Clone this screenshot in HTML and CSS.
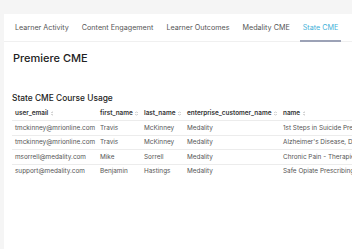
FILE: index.html
```html
<!DOCTYPE html>
<html lang="en">
<head>
    <meta charset="UTF-8">
    <title>State CME</title>
    <link rel="stylesheet" href="styles.css">
</head>
<body>
    <div class="panel">
        <nav class="tabs">
            <a class="tab">Learner Activity</a>
            <a class="tab">Content Engagement</a>
            <a class="tab">Learner Outcomes</a>
            <a class="tab">Medality CME</a>
            <a class="tab active">State CME</a>
        </nav>

        <div class="content">
            <h1 class="page-title">Premiere CME</h1>

            <h2 class="section-title">State CME Course Usage</h2>
            <table class="usage">
                <colgroup>
                    <col class="c-email">
                    <col class="c-first">
                    <col class="c-last">
                    <col class="c-ent">
                    <col class="c-name">
                </colgroup>
                <thead>
                    <tr>
                        <th>user_email <span class="sort"></span></th>
                        <th>first_name <span class="sort"></span></th>
                        <th>last_name <span class="sort"></span></th>
                        <th>enterprise_customer_name <span class="sort"></span></th>
                        <th>name <span class="sort"></span></th>
                    </tr>
                </thead>
                <tbody>
                    <tr>
                        <td>tmckinney@mrionline.com</td>
                        <td>Travis</td>
                        <td>McKinney</td>
                        <td>Medality</td>
                        <td>1st Steps in Suicide Pre</td>
                    </tr>
                    <tr>
                        <td>tmckinney@mrionline.com</td>
                        <td>Travis</td>
                        <td>McKinney</td>
                        <td>Medality</td>
                        <td>Alzheimer's Disease, De</td>
                    </tr>
                    <tr>
                        <td>msorrell@medality.com</td>
                        <td>Mike</td>
                        <td>Sorrell</td>
                        <td>Medality</td>
                        <td>Chronic Pain - Therapie</td>
                    </tr>
                    <tr>
                        <td>support@medality.com</td>
                        <td>Benjamin</td>
                        <td>Hastings</td>
                        <td>Medality</td>
                        <td>Safe Opiate Prescribing</td>
                    </tr>
                </tbody>
            </table>
        </div>
    </div>
</body>
</html>
```

FILE: styles.css
```css
body {
    margin: 0;
    background: #f5f5f5;
    font-family: Inter, "Noto Sans", sans-serif;
    color: #333;
    overflow: hidden;
    height: 249px;
}

.panel {
    margin: 14px 0 0 4px;
    width: 348px;
    height: 235px;
    background: #ffffff;
    overflow: hidden;
}

.tabs {
    display: flex;
    height: 27px;
    padding-left: 8px;
    border-bottom: 1px solid #f0f0f0;
}

.tab {
    display: flex;
    align-items: center;
    padding: 0 3px;
    margin-right: 7px;
    font-size: 7.2px;
    color: #555;
    white-space: nowrap;
    border-bottom: 2px solid transparent;
    margin-bottom: -1px;
}

.tab.active {
    color: #3fb0d8;
    border-bottom-color: #9ca2b6;
}

.content {
    padding-left: 8px;
}

.page-title {
    margin: 9px 0 0 1px;
    font-size: 11px;
    line-height: 15px;
    font-weight: 500;
    color: #222;
}

.section-title {
    margin: 26px 0 2px 0;
    font-size: 8.4px;
    line-height: 12px;
    font-weight: 500;
    color: #222;
}

.usage {
    border-collapse: collapse;
    table-layout: fixed;
    width: 340px;
    font-size: 6.4px;
    line-height: 8px;
}

.c-email { width: 85px; }
.c-first { width: 44px; }
.c-last { width: 43px; }
.c-ent { width: 96px; }
.c-name { width: 72px; }

.usage th,
.usage td {
    padding: 0 3px;
    text-align: left;
    white-space: nowrap;
    overflow: hidden;
}

.usage th {
    height: 14px;
    font-weight: 600;
    color: #333;
}

.usage td {
    height: 13.5px;
    color: #555;
    border-top: 1px solid #ececec;
}

.sort {
    display: inline-block;
    width: 3px;
    height: 5px;
    margin-left: 1px;
    vertical-align: -0.5px;
    background:
        linear-gradient(to bottom right, transparent 50%, #d4d4d4 50%) top left / 1.5px 2px no-repeat,
        linear-gradient(to bottom left, transparent 50%, #d4d4d4 50%) top right / 1.5px 2px no-repeat,
        linear-gradient(to top right, transparent 50%, #d4d4d4 50%) bottom left / 1.5px 2px no-repeat,
        linear-gradient(to top left, transparent 50%, #d4d4d4 50%) bottom right / 1.5px 2px no-repeat;
}
```
